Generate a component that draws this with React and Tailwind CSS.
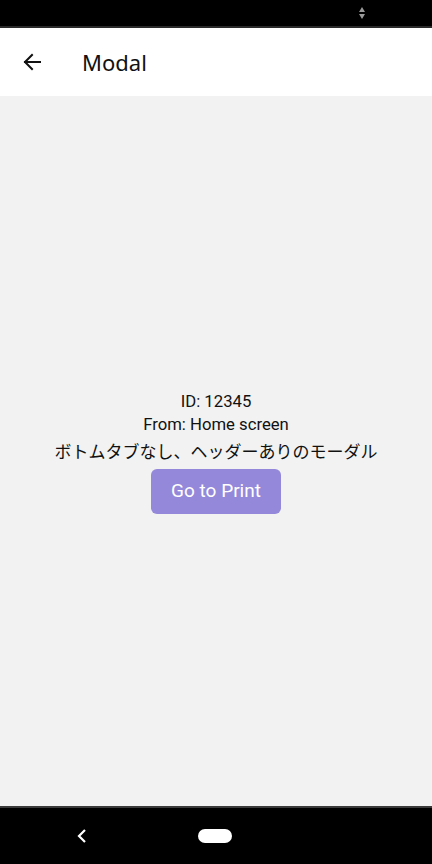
import React from 'react';

export default function App() {
  return (
    <div className="flex flex-col h-[864px] w-[432px] bg-[#f2f2f2] font-['Roboto','Noto_Sans_CJK_JP',sans-serif]">
      <div className="h-[26px] bg-black flex items-center justify-end pr-[66px] border-b-2 border-[#2a2a2a] box-content">
        <svg width="8" height="14" viewBox="0 0 8 14">
          <path d="M4 1 L7 6 H1 Z" fill="#9a9a9a" />
          <path d="M4 13 L7 8 H1 Z" fill="#9a9a9a" />
        </svg>
      </div>
      <div className="h-[68px] bg-white flex items-center">
        <svg className="ml-[20px]" width="24" height="24" viewBox="0 0 24 24" fill="none" stroke="#111" strokeWidth="2" strokeLinecap="square">
          <path d="M20 12 H5" />
          <path d="M12 5 L5 12 L12 19" />
        </svg>
        <span className="ml-[38px] text-[22px] text-[#111] font-['Noto_Sans',sans-serif]">Modal</span>
      </div>
      <div className="flex-1 flex flex-col items-center justify-center pt-[2px]">
        <div className="text-[16.7px] leading-[23px] text-[#111]">ID: 12345</div>
        <div className="text-[16.7px] leading-[23px] text-[#111]">From: Home screen</div>
        <div className="text-[17px] leading-[32px] text-[#111]">ボトムタブなし、ヘッダーありのモーダル</div>
        <button className="mt-[1px] w-[130px] h-[45px] rounded-[6px] bg-[#9488da] text-white text-[19px]">Go to Print</button>
      </div>
      <div className="h-[56px] bg-black border-t-2 border-[#3a3a3a] box-content flex items-center">
        <svg className="ml-[76px]" width="12" height="16" viewBox="0 0 12 16" fill="none" stroke="white" strokeWidth="2.2">
          <path d="M9 2 L3 8 L9 14" />
        </svg>
        <div className="ml-[110px] w-[34px] h-[14px] rounded-full bg-white" />
      </div>
    </div>
  );
}
